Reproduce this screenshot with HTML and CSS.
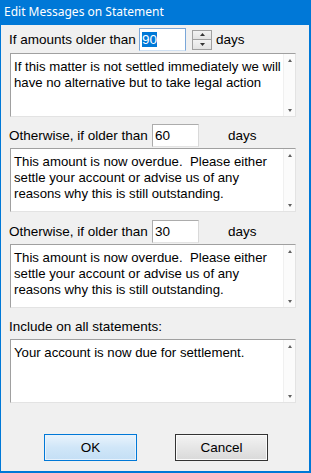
FILE: index.html
```html
<!DOCTYPE html>
<html>
<head>
<meta charset="utf-8">
<link rel="stylesheet" href="styles.css">
</head>
<body>
<div class="window">
  <div class="titlebar">Edit Messages on Statement</div>
  <div class="content">
    <div class="row row1">
      <span class="label l1">If amounts older than</span>
      <span class="input"><span class="sel">90</span></span>
      <span class="spin">
        <span class="spinbtn"><svg width="5" height="3" viewBox="0 0 5 3"><path d="M2.5 0L5 3H0z" fill="#333"/></svg></span>
        <span class="spinbtn"><svg width="5" height="3" viewBox="0 0 5 3"><path d="M0 0H5L2.5 3z" fill="#333"/></svg></span>
      </span>
      <span class="days d1">days</span>
    </div>
    <div class="memo m1">
      <div class="memotext">If this matter is not settled immediately we will<br>have no alternative but to take legal action</div>
      <div class="scroll"><span class="up"></span><span class="down"></span></div>
    </div>

    <div class="row row2">
      <span class="label l2">Otherwise, if older than</span>
      <span class="input">60</span>
      <span class="days d2">days</span>
    </div>
    <div class="memo m2">
      <div class="memotext">This amount is now overdue.&nbsp; Please either<br>settle your account or advise us of any<br>reasons why this is still outstanding.</div>
      <div class="scroll"><span class="up"></span><span class="down"></span></div>
    </div>

    <div class="row row3">
      <span class="label l2">Otherwise, if older than</span>
      <span class="input">30</span>
      <span class="days d2">days</span>
    </div>
    <div class="memo m3">
      <div class="memotext">This amount is now overdue.&nbsp; Please either<br>settle your account or advise us of any<br>reasons why this is still outstanding.</div>
      <div class="scroll"><span class="up"></span><span class="down"></span></div>
    </div>

    <div class="include">Include on all statements:</div>
    <div class="memo m4">
      <div class="memotext">Your account is now due for settlement.</div>
      <div class="scroll"><span class="up"></span><span class="down"></span></div>
    </div>

    <div class="buttons">
      <button class="btn ok">OK</button>
      <button class="btn cancel">Cancel</button>
    </div>
  </div>
</div>
</body>
</html>
```

FILE: styles.css
```css
html, body {
  margin: 0;
  padding: 0;
  background: #f0f0f0;
}
.window {
  width: 311px;
  height: 473px;
  box-sizing: border-box;
  background: #f0f0f0;
  border-left: 1px solid #0078d7;
  border-right: 2px solid #0078d7;
  border-bottom: 2px solid #0078d7;
  display: flex;
  flex-direction: column;
  font-family: "Liberation Sans", Arial, sans-serif;
  font-size: 13.5px;
  color: #000;
}
.titlebar {
  height: 25px;
  margin-left: -1px;
  margin-right: -2px;
  background: #0078d7;
  color: #fff;
  font-family: "Noto Sans", "Open Sans", sans-serif;
  font-size: 12px;
  line-height: 24px;
  padding-left: 4px;
}
.content {
  padding-left: 8px;
  display: flex;
  flex-direction: column;
}
.row {
  display: flex;
  align-items: center;
  height: 23px;
}
.row1 { margin-top: 3px; }
.row2 { margin-top: 7px; }
.row3 { margin-top: 8px; }
.label { white-space: nowrap; }
.l1 { width: 130px; }
.l2 { width: 143px; }
.input {
  box-sizing: border-box;
  width: 47px;
  height: 23px;
  background: #fff;
  border: 1px solid #acacac;
  border-bottom-color: #e3e3e3;
  border-right-color: #d9d9d9;
  padding-left: 2px;
  line-height: 21px;
}
.row1 .input { border-color: #7aa7d9; border-bottom-color: #cfe0f2; }
.sel {
  background: #0078d7;
  color: #fff;
}
.spin {
  display: flex;
  flex-direction: column;
  margin-left: 6px;
  width: 20px;
  height: 20px;
}
.spinbtn {
  box-sizing: border-box;
  height: 10px;
  border: 1px solid #a0a0a0;
  background: linear-gradient(#f2f2f2, #e2e2e2);
  display: flex;
  align-items: center;
  justify-content: center;
}
.spinbtn + .spinbtn { border-top: none; height: 10px; }
.days { margin-left: 4px; }
.d2 { margin-left: 29px; }
.memo {
  box-sizing: border-box;
  margin-left: 1px;
  width: 286px;
  height: 64px;
  background: #fff;
  border-top: 1px solid #a0a0a0;
  border-left: 1px solid #a0a0a0;
  border-right: 1px solid #e3e3e3;
  border-bottom: 1px solid #e3e3e3;
  display: flex;
}
.m1 { margin-top: 2px; }
.m2 { margin-top: 1px; }
.m3 { margin-top: 1px; }
.m4 { margin-top: 4px; }
.memotext {
  flex: 1;
  min-width: 0;
  padding: 5px 0 0 3px;
  font-size: 13.2px;
  line-height: 16px;
  white-space: nowrap;
}
.scroll {
  width: 12px;
  flex: none;
  border-left: 1px solid #f0f0f0;
  background: #fbfbfb;
  display: flex;
  flex-direction: column;
  justify-content: space-between;
  align-items: center;
  padding: 5px 0 4px;
  box-sizing: border-box;
}
.up, .down {
  width: 0;
  height: 0;
  border-left: 2.5px solid transparent;
  border-right: 2.5px solid transparent;
}
.up { border-bottom: 3px solid #606060; }
.down { border-top: 3px solid #606060; }
.include {
  margin-top: 10px;
  height: 17px;
  line-height: 17px;
}
.buttons {
  display: flex;
  margin-top: 31px;
  padding-left: 35px;
  gap: 38px;
}
.btn {
  box-sizing: border-box;
  width: 93px;
  height: 27px;
  font-family: "Liberation Sans", Arial, sans-serif;
  font-size: 13.5px;
  color: #000;
  padding: 0;
}
.ok {
  border: 1px solid #0078d7;
  background: linear-gradient(#e9f3fc, #d0e6f8 50%, #c4dff5);
  box-shadow: inset 0 0 0 1px #e8f2fc;
}
.cancel {
  border: 1px solid #333;
  background: linear-gradient(#f3f3f3, #e6e6e6 50%, #d9d9d9);
  box-shadow: inset 0 0 0 1px #fbfbfb;
}
```
